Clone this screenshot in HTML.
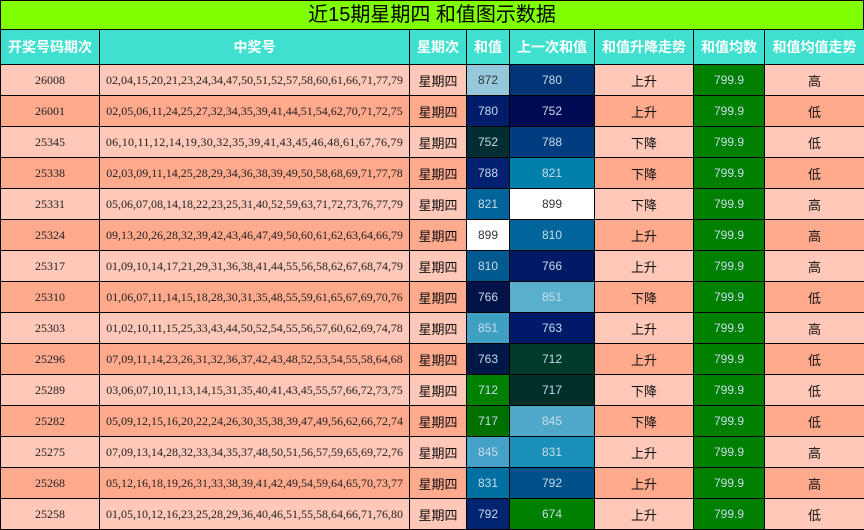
<!DOCTYPE html>
<html><head><meta charset="utf-8"><style>
body{margin:0;width:864px;height:530px;overflow:hidden;background:#fff;font-family:"Liberation Serif","Noto Sans CJK SC",serif;}
.t{height:28px;background:#7fff00;border:1px solid #000;border-bottom:none;text-align:center;font:20px/28px "Liberation Sans","Noto Sans CJK SC",sans-serif;color:#000;box-sizing:border-box;height:29px;width:864px}
table{border-collapse:collapse;table-layout:fixed;width:864px}
td,th{border:1px solid #000;text-align:center;padding:0;overflow:hidden;white-space:nowrap}
th{background:#40e0d0;color:#fff;height:34px;font:bold 14px "Liberation Sans","Noto Sans CJK SC",sans-serif}
td{height:30px;font-size:12px;color:#222}
td.c{font-family:"Liberation Sans","Noto Sans CJK SC",sans-serif;font-size:13px;color:#111}
td.n{font-family:"Liberation Sans",sans-serif;font-size:12px;color:#c8dcea}
tr.a td.b{background:#ffc8b8}tr.b td.b{background:#ffa98d}
td.g{background:#008000}
</style></head><body>
<div class="t">近15期星期四 和值图示数据</div>
<table>
<colgroup><col style="width:99px"><col style="width:310px"><col style="width:57px"><col style="width:43px"><col style="width:85px"><col style="width:99px"><col style="width:71px"><col style="width:100px"></colgroup>
<tr><th>开奖号码期次</th><th>中奖号</th><th>星期次</th><th>和值</th><th>上一次和值</th><th>和值升降走势</th><th>和值均数</th><th>和值均值走势</th></tr>
<tr class="a"><td class="b">26008</td><td class="b">02,04,15,20,21,23,24,34,47,50,51,52,57,58,60,61,66,71,77,79</td><td class="b c">星期四</td><td class="n" style="background:#96c8dc;color:#333">872</td><td class="n" style="background:#003577">780</td><td class="b c">上升</td><td class="g n">799.9</td><td class="b c">高</td></tr>
<tr class="b"><td class="b">26001</td><td class="b">02,05,06,11,24,25,27,32,34,35,39,41,44,51,54,62,70,71,72,75</td><td class="b c">星期四</td><td class="n" style="background:#001c6a">780</td><td class="n" style="background:#000a55">752</td><td class="b c">上升</td><td class="g n">799.9</td><td class="b c">低</td></tr>
<tr class="a"><td class="b">25345</td><td class="b" style="letter-spacing:0.28px">06,10,11,12,14,19,30,32,35,39,41,43,45,46,48,61,67,76,79</td><td class="b c">星期四</td><td class="n" style="background:#002e33">752</td><td class="n" style="background:#003c80">788</td><td class="b c">下降</td><td class="g n">799.9</td><td class="b c">低</td></tr>
<tr class="b"><td class="b">25338</td><td class="b">02,03,09,11,14,25,28,29,34,36,38,39,49,50,58,68,69,71,77,78</td><td class="b c">星期四</td><td class="n" style="background:#002070">788</td><td class="n" style="background:#0080aa">821</td><td class="b c">下降</td><td class="g n">799.9</td><td class="b c">低</td></tr>
<tr class="a"><td class="b">25331</td><td class="b">05,06,07,08,14,18,22,23,25,31,40,52,59,63,71,72,73,76,77,79</td><td class="b c">星期四</td><td class="n" style="background:#00649a">821</td><td class="n" style="background:#fff;color:#333">899</td><td class="b c">下降</td><td class="g n">799.9</td><td class="b c">高</td></tr>
<tr class="b"><td class="b">25324</td><td class="b">09,13,20,26,28,32,39,42,43,46,47,49,50,60,61,62,63,64,66,79</td><td class="b c">星期四</td><td class="n" style="background:#fff;color:#333">899</td><td class="n" style="background:#00659a">810</td><td class="b c">上升</td><td class="g n">799.9</td><td class="b c">高</td></tr>
<tr class="a"><td class="b">25317</td><td class="b">01,09,10,14,17,21,29,31,36,38,41,44,55,56,58,62,67,68,74,79</td><td class="b c">星期四</td><td class="n" style="background:#005a90">810</td><td class="n" style="background:#001a66">766</td><td class="b c">上升</td><td class="g n">799.9</td><td class="b c">高</td></tr>
<tr class="b"><td class="b">25310</td><td class="b">01,06,07,11,14,15,18,28,30,31,35,48,55,59,61,65,67,69,70,76</td><td class="b c">星期四</td><td class="n" style="background:#001248">766</td><td class="n" style="background:#5ab0cc">851</td><td class="b c">下降</td><td class="g n">799.9</td><td class="b c">低</td></tr>
<tr class="a"><td class="b">25303</td><td class="b">01,02,10,11,15,25,33,43,44,50,52,54,55,56,57,60,62,69,74,78</td><td class="b c">星期四</td><td class="n" style="background:#40a0c4">851</td><td class="n" style="background:#001a6a">763</td><td class="b c">上升</td><td class="g n">799.9</td><td class="b c">高</td></tr>
<tr class="b"><td class="b">25296</td><td class="b">07,09,11,14,23,26,31,32,36,37,42,43,48,52,53,54,55,58,64,68</td><td class="b c">星期四</td><td class="n" style="background:#001848">763</td><td class="n" style="background:#003a2a">712</td><td class="b c">上升</td><td class="g n">799.9</td><td class="b c">低</td></tr>
<tr class="a"><td class="b">25289</td><td class="b">03,06,07,10,11,13,14,15,31,35,40,41,43,45,55,57,66,72,73,75</td><td class="b c">星期四</td><td class="n" style="background:#008000">712</td><td class="n" style="background:#003028">717</td><td class="b c">下降</td><td class="g n">799.9</td><td class="b c">低</td></tr>
<tr class="b"><td class="b">25282</td><td class="b">05,09,12,15,16,20,22,24,26,30,35,38,39,47,49,56,62,66,72,74</td><td class="b c">星期四</td><td class="n" style="background:#007000">717</td><td class="n" style="background:#50a8c8">845</td><td class="b c">下降</td><td class="g n">799.9</td><td class="b c">低</td></tr>
<tr class="a"><td class="b">25275</td><td class="b">07,09,13,14,28,32,33,34,35,37,48,50,51,56,57,59,65,69,72,76</td><td class="b c">星期四</td><td class="n" style="background:#44a2c8">845</td><td class="n" style="background:#1a90b8">831</td><td class="b c">上升</td><td class="g n">799.9</td><td class="b c">高</td></tr>
<tr class="b"><td class="b">25268</td><td class="b">05,12,16,18,19,26,31,33,38,39,41,42,49,54,59,64,65,70,73,77</td><td class="b c">星期四</td><td class="n" style="background:#0070a0">831</td><td class="n" style="background:#00508a">792</td><td class="b c">上升</td><td class="g n">799.9</td><td class="b c">高</td></tr>
<tr class="a"><td class="b">25258</td><td class="b">01,05,10,12,16,23,25,28,29,36,40,46,51,55,58,64,66,71,76,80</td><td class="b c">星期四</td><td class="n" style="background:#002470">792</td><td class="n" style="background:#008000">674</td><td class="b c">上升</td><td class="g n">799.9</td><td class="b c">低</td></tr>
</table>
</body></html>
